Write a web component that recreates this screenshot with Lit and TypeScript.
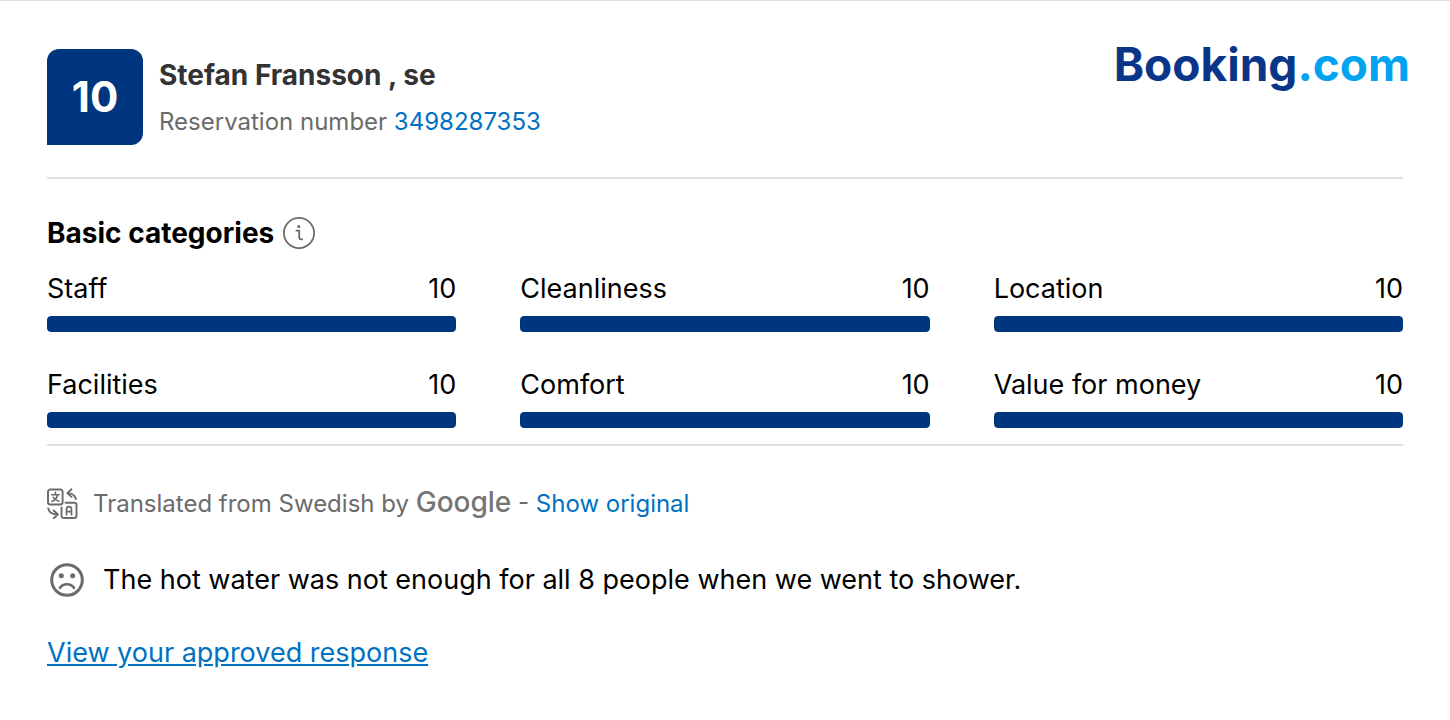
import { LitElement, html, css } from "lit";
import { customElement, property } from "lit/decorators.js";

interface Category {
  name: string;
  score: number;
}

const CATEGORIES: Category[] = [
  { name: "Staff", score: 10 },
  { name: "Cleanliness", score: 10 },
  { name: "Location", score: 10 },
  { name: "Facilities", score: 10 },
  { name: "Comfort", score: 10 },
  { name: "Value for money", score: 10 },
];

@customElement("category-score")
export class CategoryScore extends LitElement {
  @property() name = "";
  @property({ type: Number }) score = 0;

  static styles = css`
    :host {
      display: block;
    }
    .labels {
      display: flex;
      justify-content: space-between;
      line-height: 40px;
    }
    .track {
      height: 16px;
      margin-top: 7px;
      border-radius: 4px;
      background: #e6e6e6;
      overflow: hidden;
    }
    .fill {
      height: 100%;
      border-radius: 4px;
      background: #003580;
    }
  `;

  render() {
    return html`
      <div class="labels"><span>${this.name}</span><span>${this.score}</span></div>
      <div class="track"><div class="fill" style="width:${this.score * 10}%"></div></div>
    `;
  }
}

@customElement("app-root")
export class AppRoot extends LitElement {
  static styles = css`
    :host {
      display: block;
      box-sizing: border-box;
      min-height: 100vh;
      border-top: 1px solid #dedede;
      background: #fff;
      color: #000;
      font-family: Inter, "Liberation Sans", sans-serif;
      font-size: 27px;
      line-height: 40px;
    }
    a {
      color: #0071c2;
      text-decoration: none;
    }
    .header {
      display: flex;
      align-items: flex-start;
      padding: 40px 40px 0 47px;
    }
    .badge {
      display: flex;
      align-items: center;
      justify-content: center;
      width: 96px;
      height: 96px;
      margin-top: 8px;
      border-radius: 12px 12px 12px 0;
      background: #003580;
      color: #fff;
      font-size: 42px;
      font-weight: 700;
    }
    .guest {
      flex: 1;
      margin: 14px 16px 0;
    }
    .name {
      margin: 0;
      color: #333;
      font-size: 28px;
      font-weight: 700;
      line-height: 40px;
    }
    .reservation {
      margin: 9px 0 0;
      color: #6b6b6b;
      font-size: 24px;
      line-height: 36px;
    }
    .brand {
      color: #0a3689;
      font-size: 46px;
      font-weight: 700;
      line-height: 46px;
    }
    .brand-tld {
      color: #04a3f0;
    }
    .body {
      padding: 0 47px;
    }
    .categories {
      margin-top: 32px;
      padding: 34px 0 16px;
      border-top: 2px solid #e0e0e0;
      border-bottom: 2px solid #e0e0e0;
    }
    .title-row {
      display: flex;
      align-items: center;
      gap: 9px;
    }
    .title {
      margin: 0;
      font-size: 28px;
      font-weight: 700;
      line-height: 40px;
    }
    .info {
      display: flex;
      padding: 0;
      border: 0;
      background: none;
    }
    .grid {
      display: grid;
      grid-template-columns: repeat(3, 1fr);
      gap: 33px 64px;
      margin-top: 16px;
    }
    .translation {
      display: flex;
      align-items: center;
      margin-top: 40px;
      color: #6b6b6b;
      font-size: 24px;
      line-height: 36px;
    }
    .translation-text {
      margin: 0 0 0 15px;
    }
    .google {
      color: #757575;
      font-size: 28px;
      font-weight: 500;
      line-height: 24px;
    }
    .comment {
      display: flex;
      align-items: center;
      gap: 16px;
      margin-top: 37px;
    }
    .comment-text {
      margin: 0;
      line-height: 42px;
    }
    .response {
      display: inline-block;
      margin-top: 32px;
      text-decoration: underline;
    }
    svg {
      display: block;
      flex: none;
    }
  `;

  render() {
    return html`
      <header class="header">
        <div class="badge">10</div>
        <div class="guest">
          <h1 class="name">Stefan Fransson , se</h1>
          <p class="reservation">Reservation number <a href="#reservation">3498287353</a></p>
        </div>
        <div class="brand">Booking<span class="brand-tld">.com</span></div>
      </header>
      <main class="body">
        <section class="categories">
          <div class="title-row">
            <h2 class="title">Basic categories</h2>
            <button class="info" aria-label="About the categories">
              <svg width="32" height="32" viewBox="0 0 32 32" fill="none" stroke="#6b6b6b">
                <circle cx="16" cy="16" r="15.1" stroke-width="1.8" />
                <path d="M13.3 13.6h2.9v6.7q0 2 2 2h1" stroke-width="1.8" stroke-linecap="round" stroke-linejoin="round" />
                <circle cx="15.7" cy="9.6" r="1.5" fill="#6b6b6b" stroke="none" />
              </svg>
            </button>
          </div>
          <div class="grid">
            ${CATEGORIES.map(
              (c) => html`<category-score .name=${c.name} .score=${c.score}></category-score>`
            )}
          </div>
        </section>
        <section class="translation">
          <svg width="31" height="32" viewBox="0 0 31 32" fill="none" stroke="#6b6b6b" stroke-width="1.9" stroke-linecap="round" stroke-linejoin="round">
            <path d="M3.2 1.5h10.2a2.2 2.2 0 0 1 2.2 2.2v10.6a2.2 2.2 0 0 1-2.2 2.2H3.2A2.2 2.2 0 0 1 1 14.3V3.7A2.2 2.2 0 0 1 3.2 1.5z" />
            <path d="M8.4 4.3v2M4.7 6.8h7.4M10.5 7.2c-.8 3-2.6 5-5.5 6.1M6.3 9.4c1.2 2 3 3.3 5.5 3.9" stroke-width="1.6" />
            <path d="M18.6 14.8h8.7a2.2 2.2 0 0 1 2.2 2.2v10.8a2.2 2.2 0 0 1-2.2 2.2H16.7a2.2 2.2 0 0 1-2.2-2.2v-8.3" />
            <path d="M19.5 26.7v-5.2q0-2.9 2.5-2.9t2.5 2.9v5.2M19.5 23.6h5" stroke-width="1.7" />
            <path d="M24.5 1.3l-4.2 3.8 4.2 3.8M20.5 5.1c5 0 7.3 1.7 8.5 5.9" />
            <path d="M6.7 22.5l4.2 3.9-4.2 3.8M10.7 26.4c-5 0-8.3-1.7-9.5-6" />
          </svg>
          <p class="translation-text">Translated from Swedish by <span class="google">Google</span> - <a href="#original">Show original</a></p>
        </section>
        <section class="comment">
          <svg width="40" height="40" viewBox="0 0 40 40" fill="none" stroke="#6b6b6b">
            <circle cx="20" cy="20" r="15.3" stroke-width="3" />
            <circle cx="14.3" cy="15.7" r="2.5" fill="#6b6b6b" stroke="none" />
            <circle cx="25.7" cy="15.7" r="2.5" fill="#6b6b6b" stroke="none" />
            <path d="M13 27.8c3.2-4.8 10.8-4.8 14 0" stroke-width="2.6" stroke-linecap="round" />
          </svg>
          <p class="comment-text">The hot water was not enough for all 8 people when we went to shower.</p>
        </section>
        <a class="response" href="#response">View your approved response</a>
      </main>
    `;
  }
}
